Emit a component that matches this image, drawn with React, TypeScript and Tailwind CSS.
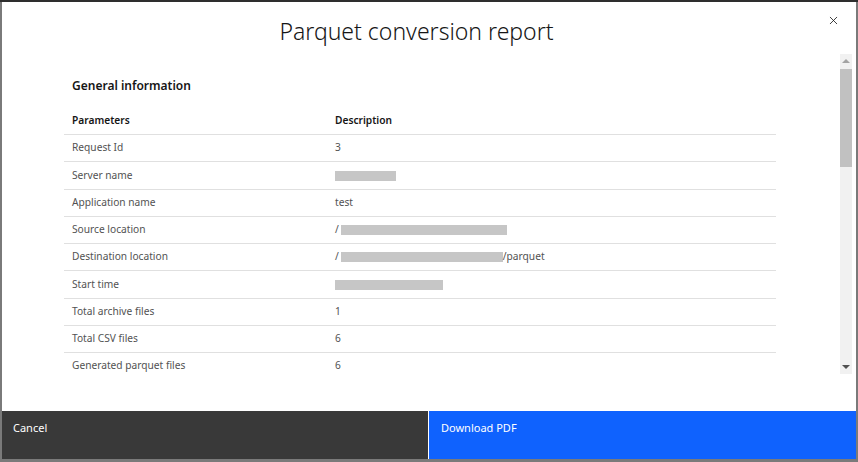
import { X } from "lucide-react";

type Row = { label: string; value: React.ReactNode };

const Redact = ({ w }: { w: string }) => (
  <span className={`inline-block h-[10px] bg-[#c6c6c6] align-middle ${w}`} />
);

const rows: Row[] = [
  { label: "Request Id", value: "3" },
  { label: "Server name", value: <Redact w="w-[61px]" /> },
  { label: "Application name", value: "test" },
  {
    label: "Source location",
    value: (
      <span className="flex items-center">
        /<Redact w="w-[166px] ml-[2px]" />
      </span>
    ),
  },
  {
    label: "Destination location",
    value: (
      <span className="flex items-center">
        /<Redact w="w-[162px] ml-[2px]" />
        <span>/parquet</span>
      </span>
    ),
  },
  { label: "Start time", value: <Redact w="w-[108px]" /> },
  { label: "Total archive files", value: "1" },
  { label: "Total CSV files", value: "6" },
  { label: "Generated parquet files", value: "6" },
];

export default function App() {
  return (
    <div className="relative h-[462px] w-[858px] overflow-hidden bg-[#7a7a7a] font-['Noto_Sans',sans-serif]">
      <div className="h-[2px] bg-[#2e2e2e]" />
      {/* modal */}
      <div className="absolute left-[2px] top-[2px] flex h-[457px] w-[854px] flex-col bg-white">
        <div className="relative flex h-[52px] items-center justify-center pr-[25px]">
          <h1 className="mt-[7px] text-[23px] font-light text-[#161616]">Parquet conversion report</h1>
          <button className="absolute right-[16px] top-[12px] text-[#161616]">
            <X size={13} strokeWidth={1.5} />
          </button>
        </div>

        <div className="flex h-[320px]">
          <div className="flex-1 overflow-hidden pl-[62px] pr-[64px]">
            <h2 className="mt-[23px] pl-[8px] text-[12px] font-semibold text-[#161616]">General information</h2>
            <div className="mt-[13px]">
              <div className="flex h-[27px] items-center border-b border-[#e0e0e0] text-[10.2px] font-semibold text-[#161616]">
                <div className="w-[271px] pl-[8px]">Parameters</div>
                <div>Description</div>
              </div>
              {rows.map((r) => (
                <div
                  key={r.label}
                  className="flex h-[27.25px] items-center border-b border-[#e0e0e0] text-[10.2px] text-[#525252]"
                >
                  <div className="w-[271px] pl-[8px]">{r.label}</div>
                  <div>{r.value}</div>
                </div>
              ))}
            </div>
          </div>
          {/* scrollbar */}
          <div className="mr-[4px] flex w-[12px] flex-col items-center bg-[#f1f1f1]">
            <div className="mt-[5px] h-0 w-0 border-x-[4px] border-b-[4px] border-x-transparent border-b-[#a3a3a3]" />
            <div className="mt-[6px] h-[98px] w-[12px] bg-[#c1c1c1]" />
            <div className="flex-1" />
            <div className="mb-[5px] h-0 w-0 border-x-[4px] border-t-[4px] border-x-transparent border-t-[#505050]" />
          </div>
        </div>

        <div className="flex-1" />

        <div className="flex h-[48px]">
          <button className="flex w-[426px] items-start bg-[#393939] px-[11px] pt-[9px] text-left text-[11px] text-white">
            Cancel
          </button>
          <div className="w-px bg-white" />
          <button className="flex flex-1 items-start bg-[#0f62fe] px-[12px] pt-[9px] text-left text-[11px] text-white">
            Download PDF
          </button>
        </div>
      </div>
    </div>
  );
}
